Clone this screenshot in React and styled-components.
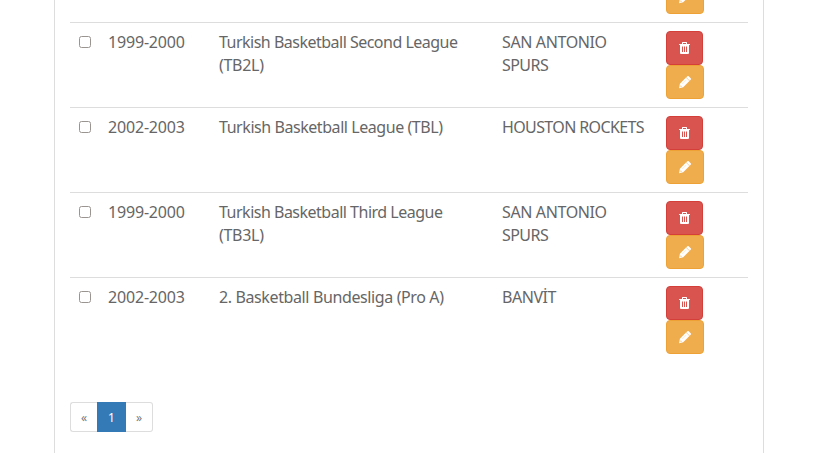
import React from "react";
import styled, { createGlobalStyle } from "styled-components";

const GlobalStyle = createGlobalStyle`
  * { box-sizing: border-box; }
  body {
    margin: 0;
    background: #fff;
    color: #666;
    font: 16px/23px "Noto Sans", "Open Sans", sans-serif;
    overflow: hidden;
  }
`;

const Page = styled.main`
  height: 453px;
  padding-left: 54px;
  overflow: hidden;
  display: flex;
`;

const Panel = styled.section`
  width: 710px;
  height: 453px;
  padding: 0 15px;
  border: solid #ddd;
  border-width: 0 1px;
  overflow: hidden;
  display: flex;
  flex-direction: column;
  justify-content: flex-end;
`;

const List = styled.div`
  flex: none;
`;

const Row = styled.div`
  display: grid;
  grid-template-columns: 30px 111px 283px 164px 1fr;
  height: 85px;
  padding-top: 8px;
  border-top: 1px solid #ddd;
`;

const Cell = styled.div`
  padding-left: 8px;
`;

const Line = styled.div`
  letter-spacing: ${(p) => p.$spacing}px;
  white-space: nowrap;
`;

const Checkbox = styled.input`
  appearance: none;
  display: block;
  width: 12px;
  height: 12px;
  margin: 5px 0 0 1px;
  border: 1px solid #9a9590;
  border-radius: 2.5px;
  background: #fff;
`;

const Actions = styled.div`
  grid-column: 5;
  display: flex;
  flex-direction: column;
  padding-left: 8px;
`;

const ActionButton = styled.button`
  display: flex;
  align-items: center;
  justify-content: center;
  width: ${(p) => (p.$danger ? 37 : 38)}px;
  height: 34px;
  padding: 0;
  border: 1px solid ${(p) => (p.$danger ? "#d43f3a" : "#eea236")};
  border-radius: 4px;
  background: ${(p) => (p.$danger ? "#d9534f" : "#f0ad4e")};
  color: #fff;
`;

const Icon = styled.svg`
  display: block;
  flex: none;
  width: ${(p) => p.$width}px;
  height: 14px;
`;

const Pagination = styled.nav`
  flex: none;
  display: flex;
  width: 83px;
  height: 30px;
  margin: 40px 0 21px;
`;

const PageButton = styled.button`
  width: ${(p) => (p.$active ? 29 : 27)}px;
  padding: 2px 0 0;
  border: 1px solid ${(p) => (p.$active ? "#337ab7" : "#ddd")};
  border-left-width: ${(p) => (p.$last ? 0 : 1)}px;
  border-right-width: ${(p) => (p.$first ? 0 : 1)}px;
  border-radius: ${(p) => (p.$first ? "3px 0 0 3px" : p.$last ? "0 3px 3px 0" : "0")};
  background: ${(p) => (p.$active ? "#337ab7" : "#fff")};
  color: ${(p) => (p.$active ? "#fff" : "#777")};
  font: 12px/18px "Noto Sans", sans-serif;
`;

const TrashIcon = () => (
  <Icon $width={13} viewBox="0 0 13 14" fill="currentColor" aria-hidden="true">
    <path fillRule="evenodd" d="M4 3V1.6Q4 1 4.6 1h3.8q.6 0 .6.6V3h2.5q.5 0 .5.5V4H1v-.5q0-.5.5-.5zM5 3h3V2H5zM2 4h9v8q0 1-1 1H3q-1 0-1-1zM4 5.5V11h1V5.5zM6 5.5V11h1V5.5zM8 5.5V11h1V5.5z" />
  </Icon>
);

const PencilIcon = () => (
  <Icon $width={14} viewBox="0 0 14 14" fill="currentColor" aria-hidden="true">
    <path fillRule="evenodd" d="M9.3 1.3q.7-.7 1.4 0l2 2q.7.7 0 1.4l-1 1-3.4-3.4zM8 2.6 11.4 6 5.2 12.2l-4.1 1 .8-4.4zM2.8 10.3l-.3 1.4 1.4-.3z" />
    <path d="m4.3 8.9 4-4" stroke="#f0ad4e" strokeWidth=".25" />
  </Icon>
);

/* Each line is a [text, tracking] pair. */
const rows = [
  { cut: true },
  {
    season: "1999-2000",
    league: [["Turkish Basketball Second League", -0.51], ["(TB2L)", -0.3]],
    team: [["SAN ANTONIO", -0.38], ["SPURS", -0.55]],
  },
  {
    season: "2002-2003",
    league: [["Turkish Basketball League (TBL)", -0.44]],
    team: [["HOUSTON ROCKETS", -0.62]],
  },
  {
    season: "1999-2000",
    league: [["Turkish Basketball Third League", -0.5], ["(TB3L)", -0.3]],
    team: [["SAN ANTONIO", -0.38], ["SPURS", -0.55]],
  },
  {
    season: "2002-2003",
    league: [["2. Basketball Bundesliga (Pro A)", -0.38]],
    team: [["BANVİT", -0.45]],
  },
];

const TextCell = ({ lines }) => (
  <Cell>
    {lines.map(([text, spacing]) => (
      <Line key={text} $spacing={spacing}>{text}</Line>
    ))}
  </Cell>
);

export default function App() {
  return (
    <>
      <GlobalStyle />
      <Page>
        <Panel>
          <List>
            {rows.map((row, index) => (
              <Row key={index}>
                {!row.cut && (
                  <>
                    <Cell><Checkbox type="checkbox" aria-label="Select row" /></Cell>
                    <TextCell lines={[[row.season, -0.18]]} />
                    <TextCell lines={row.league} />
                    <TextCell lines={row.team} />
                  </>
                )}
                <Actions>
                  <ActionButton $danger aria-label="Delete"><TrashIcon /></ActionButton>
                  <ActionButton aria-label="Edit"><PencilIcon /></ActionButton>
                </Actions>
              </Row>
            ))}
          </List>
          <Pagination>
            <PageButton $first>«</PageButton>
            <PageButton $active>1</PageButton>
            <PageButton $last>»</PageButton>
          </Pagination>
        </Panel>
      </Page>
    </>
  );
}
